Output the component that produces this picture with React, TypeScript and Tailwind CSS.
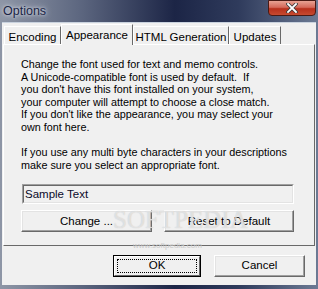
import React from 'react';

const bodyLines = [
  'Change the font used for text and memo controls.',
  'A Unicode-compatible font is used by default.  If',
  "you don't have this font installed on your system,",
  'your computer will attempt to choose a close match.',
  "If you don't like the appearance, you may select your",
  'own font here.',
];

const tabs = [
  { label: 'Encoding', w: 'w-[57px]' },
  { label: 'Appearance', w: 'w-[72px]' },
  { label: 'HTML Generation', w: 'w-[96px]' },
  { label: 'Updates', w: 'w-[52px]' },
];

const btn =
  'h-[22px] flex items-center justify-center bg-[#f0f0f0] border border-t-white border-l-white border-r-[#696969] border-b-[#696969] shadow-[inset_-1px_-1px_0_#a0a0a0,inset_1px_1px_0_#e3e3e3] text-black whitespace-nowrap';

const ClassicButton: React.FC<{ label: string; className?: string }> = ({ label, className }) => (
  <div className={btn + ' ' + (className || '')}>{label}</div>
);

export default function App() {
  return (
    <div
      className="relative w-[318px] h-[289px] overflow-hidden bg-[linear-gradient(90deg,#8e96a6_0%,#5d6780_25%,#1c2546_55%,#2f3b5c_75%,#6c7a94_100%)]"
      style={{ fontFamily: '"Liberation Sans", Arial, sans-serif' }}
    >
      {/* title bar */}
      <div className="h-[22px] flex items-center pl-[3px]">
        <span className="text-[12.5px] text-[#1b2545] [text-shadow:0_0_6px_#d8dce6,0_0_3px_#d8dce6]">Options</span>
      </div>
      <div className="absolute top-0 right-[2px] w-[48px] h-[16px] rounded-b-[4px] border border-[#4a1a14] bg-[linear-gradient(180deg,#e8a293_0%,#d5695a_45%,#b8301c_55%,#c64a30_100%)] flex items-center justify-center">
        <svg width="12" height="10" viewBox="0 0 12 10">
          <path d="M2 1 L10 9 M10 1 L2 9" stroke="#3a3a3a" strokeWidth="3.4" strokeLinecap="square" />
          <path d="M2 1 L10 9 M10 1 L2 9" stroke="#ffffff" strokeWidth="1.8" strokeLinecap="square" />
        </svg>
      </div>

      {/* client area */}
      <div className="mx-[2px] w-[314px] h-[263px] bg-[#f0f0f0] border-t border-[#c9d2de] flex flex-col text-[11px] text-black">
        {/* tabs */}
        <div className="flex items-end pl-[2px] pt-[1px] h-[21px]">
          {tabs.map((t) => {
            const active = t.label === 'Appearance';
            return (
              <div
                key={t.label}
                className={
                  t.w +
                  ' flex justify-center whitespace-nowrap text-[11.5px] border-l border-t border-r border-l-white border-t-white border-r-[#696969] ' +
                  (active
                    ? 'h-[21px] pt-[2px] bg-[#f0f0f0] relative z-10 -mb-[1px]'
                    : 'h-[18px] pt-[2px]')
                }
              >
                {t.label}
              </div>
            );
          })}
        </div>

        {/* panel */}
        <div className="ml-[1px] w-[312px] h-[202px] border border-t-white border-l-white border-r-[#696969] border-b-[#696969] flex flex-col pl-[17px] pt-[13px]">
          <div className="leading-[12.6px] whitespace-pre text-[10.8px]">
            {bodyLines.map((l) => (
              <div key={l}>{l}</div>
            ))}
            <div>&nbsp;</div>
            <div>If you use any multi byte characters in your descriptions</div>
            <div>make sure you select an appropriate font.</div>
          </div>
          <div className="mt-[13px] ml-[1px] w-[272px] h-[20px] border border-t-[#a0a0a0] border-l-[#a0a0a0] border-r-white border-b-white">
            <div className="h-full border border-t-[#696969] border-l-[#696969] border-r-[#e3e3e3] border-b-[#e3e3e3] pl-[1px] text-[11.5px] leading-[16px] text-[#0a0a2a]">
              Sample Text
            </div>
          </div>
          <div className="mt-[6px] flex gap-[12px]">
            <ClassicButton label="Change ..." className="w-[131px] text-[11.5px]" />
            <ClassicButton label="Reset to Default" className="w-[130px] text-[11.5px]" />
          </div>
        </div>

        {/* bottom buttons */}
        <div className="mt-[9px] flex pl-[111px] gap-[13px]">
          <div className="w-[88px] h-[22px] border border-black">
            <div className="h-full bg-[#f0f0f0] border border-t-white border-l-white border-r-[#696969] border-b-[#696969] p-[2px]">
              <div className="h-full border border-dotted border-black flex items-center justify-center text-[11.5px]">OK</div>
            </div>
          </div>
          <ClassicButton label="Cancel" className="w-[91px] text-[11.5px]" />
        </div>
      </div>

      {/* watermark */}
      <div
        className="absolute left-[113px] top-[206px] text-[25px] leading-[28px] text-white/50 [text-shadow:0_0_1px_#bdbdbd] pointer-events-none"
        style={{ fontFamily: '"Liberation Serif", serif' }}
      >
        SOFTPEDIA
      </div>
      <div className="absolute left-[133px] top-[241px] text-[8px] leading-[10px] text-[#c8c8c8] pointer-events-none">www.softpedia.com</div>
    </div>
  );
}
